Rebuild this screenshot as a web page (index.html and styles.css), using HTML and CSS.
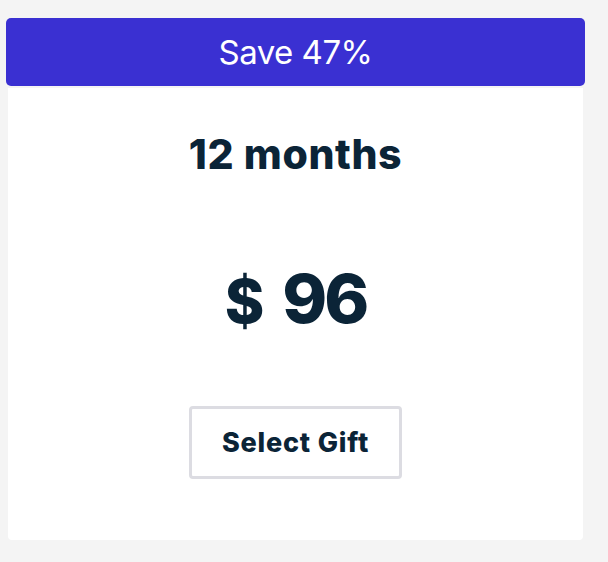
FILE: index.html
```html
<!DOCTYPE html>
<html>
<head>
<meta charset="utf-8">
<link rel="stylesheet" href="styles.css">
</head>
<body>
<div class="wrap">
  <div class="banner">Save 47%</div>
  <div class="card">
    <div class="term">12 months</div>
    <div class="price"><span class="cur">$</span> 96</div>
    <button class="select">Select Gift</button>
  </div>
</div>
</body>
</html>
```
FILE: styles.css
```css
* { box-sizing: border-box; }
html, body { margin: 0; padding: 0; }
body {
  background: #f4f4f4;
  font-family: Inter, "Noto Sans", sans-serif;
  color: #0b2437;
  width: 608px;
  height: 562px;
}
.wrap {
  padding: 18px 0 0 6px;
  display: flex;
  flex-direction: column;
  align-items: flex-start;
}
.banner {
  width: 579px;
  height: 68px;
  background: #3a30d2;
  color: #ffffff;
  border-radius: 5px;
  font-size: 33px;
  font-weight: 400;
  letter-spacing: -0.5px;
  line-height: 68px;
  text-align: center;
}
.card {
  margin: 2px 0 0 2px;
  width: 575px;
  height: 452px;
  background: #ffffff;
  border-radius: 0 0 4px 4px;
  display: flex;
  flex-direction: column;
  align-items: center;
  padding-top: 41px;
}
.term {
  font-size: 41px;
  font-weight: 800;
  letter-spacing: 0.6px;
  line-height: 50px;
}
.price {
  margin-top: 79px;
  height: 80px;
  font-size: 68px;
  font-weight: 800;
  letter-spacing: -3px;
  word-spacing: 6px;
  line-height: 80px;
}
.cur {
  font-size: 60px;
  line-height: 1;
  letter-spacing: 0;
}
.select {
  margin-top: 68px;
  width: 213px;
  height: 73px;
  border: 3px solid #dcdce2;
  border-radius: 4px;
  background: #ffffff;
  color: #0b2437;
  font-family: inherit;
  font-size: 27px;
  font-weight: 800;
  letter-spacing: 0.8px;
  line-height: 67px;
  padding: 0;
}
```
